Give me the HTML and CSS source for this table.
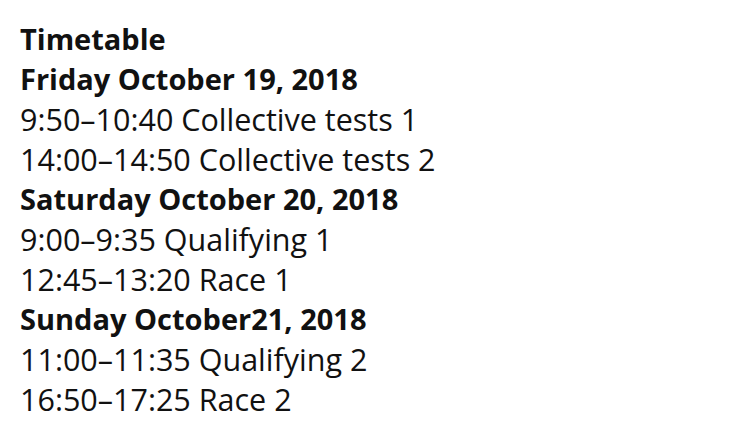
FILE: index.html
```html
<!DOCTYPE html>
<html>
<head>
<meta charset="utf-8">
<link rel="stylesheet" href="styles.css">
</head>
<body>
<div class="timetable">
  <div class="head">Timetable</div>
  <div class="head">Friday October 19, 2018</div>
  <div class="row">9:50–10:40 Collective tests 1</div>
  <div class="row">14:00–14:50 Collective tests 2</div>
  <div class="head">Saturday October 20, 2018</div>
  <div class="row">9:00–9:35 Qualifying 1</div>
  <div class="row">12:45–13:20 Race 1</div>
  <div class="head">Sunday October21, 2018</div>
  <div class="row">11:00–11:35 Qualifying 2</div>
  <div class="row">16:50–17:25 Race 2</div>
</div>
</body>
</html>
```
FILE: styles.css
```css
html, body {
  margin: 0;
  padding: 0;
  background: #ffffff;
}
body {
  font-family: "Open Sans", "Noto Sans", sans-serif;
  color: #111111;
}
.timetable {
  display: flex;
  flex-direction: column;
  padding: 19px 0 0 20px;
  font-size: 30.5px;
  line-height: 40px;
}
.head {
  font-weight: 700;
  font-size: 29px;
}
.row {
  font-weight: 400;
}
```
